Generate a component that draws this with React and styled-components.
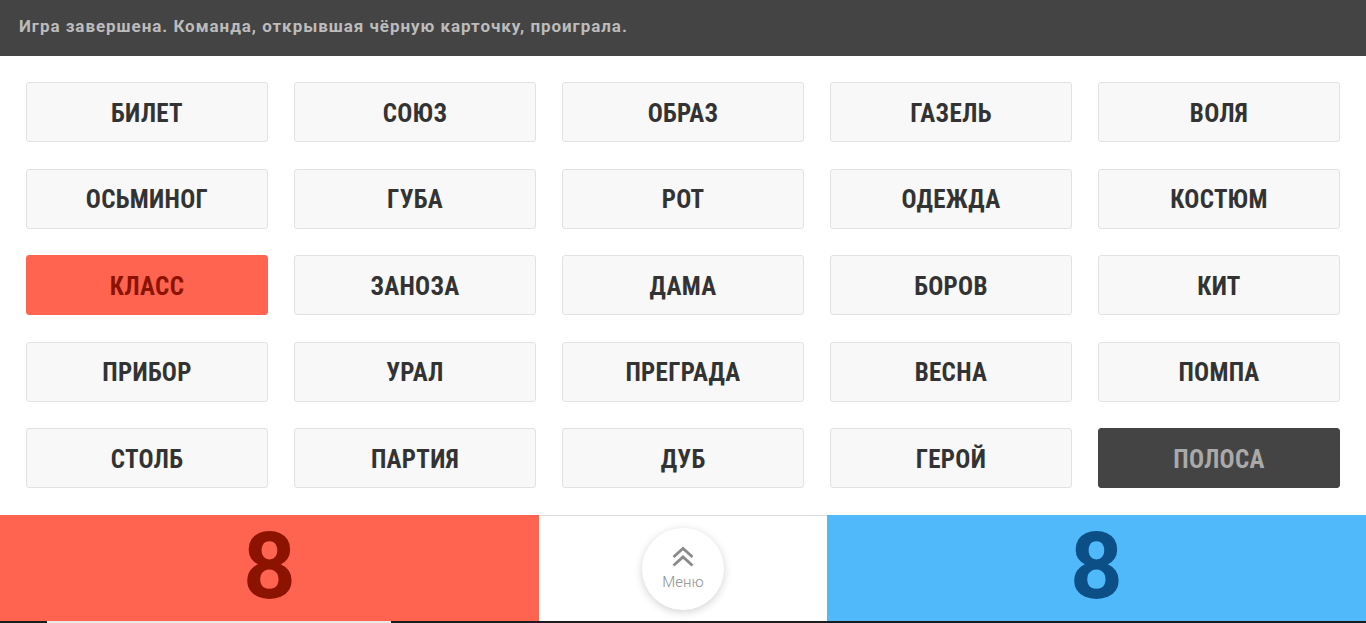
import React from 'react';
import styled, { createGlobalStyle } from 'styled-components';

const GlobalStyle = createGlobalStyle`
  html, body {
    margin: 0;
    padding: 0;
    background: #fff;
    font-family: "Roboto Condensed", Roboto, "Liberation Sans", sans-serif;
  }
  * { box-sizing: border-box; }
`;

const WORDS = [
  ['БИЛЕТ', 'СОЮЗ', 'ОБРАЗ', 'ГАЗЕЛЬ', 'ВОЛЯ'],
  ['ОСЬМИНОГ', 'ГУБА', 'РОТ', 'ОДЕЖДА', 'КОСТЮМ'],
  ['КЛАСС', 'ЗАНОЗА', 'ДАМА', 'БОРОВ', 'КИТ'],
  ['ПРИБОР', 'УРАЛ', 'ПРЕГРАДА', 'ВЕСНА', 'ПОМПА'],
  ['СТОЛБ', 'ПАРТИЯ', 'ДУБ', 'ГЕРОЙ', 'ПОЛОСА'],
];

const OPENED = { 'КЛАСС': 'red', 'ПОЛОСА': 'black' };

function App() {
  return (
    <Page>
      <GlobalStyle />
      <StatusBar>Игра завершена. Команда, открывшая чёрную карточку, проиграла.</StatusBar>
      <Board>
        {WORDS.flat().map((w) => (
          <Card key={w} $kind={OPENED[w]}>
            <Label>{w}</Label>
          </Card>
        ))}
      </Board>
      <Footer>
        <Score $team="red">8</Score>
        <Middle>
          <MenuButton>
            <svg width="26" height="22" viewBox="0 0 26 22" fill="none" stroke="#8a8a8a" strokeWidth="2.8" strokeLinejoin="miter">
              <path d="M3.5 11 L13 2.5 L22.5 11" />
              <path d="M3.5 19.5 L13 11 L22.5 19.5" />
            </svg>
            <MenuText>Меню</MenuText>
          </MenuButton>
        </Middle>
        <Score $team="blue">8</Score>
      </Footer>
      <BottomStrip>
        <StripLight />
      </BottomStrip>
    </Page>
  );
}

const Page = styled.div`
  width: 1366px;
  height: 623px;
  display: flex;
  flex-direction: column;
  overflow: hidden;
`;

const StatusBar = styled.div`
  height: 56px;
  flex: none;
  background: #444444;
  color: #bcbcbc;
  font-family: Roboto, "Liberation Sans", sans-serif;
  font-weight: 700;
  font-size: 17px;
  letter-spacing: 0.95px;
  display: flex;
  align-items: center;
  padding: 0 19px 4px;
`;

const Board = styled.div`
  flex: none;
  display: grid;
  grid-template-columns: repeat(5, 242px);
  grid-auto-rows: 60px;
  column-gap: 26px;
  row-gap: 26.5px;
  padding: 26px 26px 27px;
`;

const cardColors = {
  red: { bg: '#ff6450', border: '#ff6450', fg: '#8c1300' },
  black: { bg: '#444444', border: '#444444', fg: '#a9a9a9' },
};

const Card = styled.div`
  display: flex;
  align-items: center;
  justify-content: center;
  border-radius: 3px;
  background: ${(p) => (p.$kind ? cardColors[p.$kind].bg : '#f8f8f8')};
  border: 1px solid ${(p) => (p.$kind ? cardColors[p.$kind].border : '#e2e2e2')};
  color: ${(p) => (p.$kind ? cardColors[p.$kind].fg : '#333333')};
`;

const Label = styled.span`
  font-size: 25px;
  font-weight: 700;
  letter-spacing: 0.3px;
  padding-top: 2px;
`;

const Footer = styled.div`
  flex: none;
  height: 106px;
  display: grid;
  grid-template-columns: 539px 288px 1fr;
`;

const teamColors = {
  red: { bg: '#ff6450', fg: '#8c1300' },
  blue: { bg: '#50b9fa', fg: '#0b4f86' },
};

const Score = styled.div`
  background: ${(p) => teamColors[p.$team].bg};
  color: ${(p) => teamColors[p.$team].fg};
  font-family: Roboto, "Liberation Sans", sans-serif;
  font-weight: 700;
  font-size: 92px;
  line-height: 1;
  display: flex;
  align-items: center;
  justify-content: center;
  padding-bottom: 2px;
`;

const Middle = styled.div`
  background: #fff;
  border-top: 1px solid #dcdcdc;
  display: flex;
  align-items: center;
  justify-content: center;
`;

const MenuButton = styled.div`
  width: 82px;
  height: 82px;
  border-radius: 50%;
  background: #fff;
  box-shadow: 0 2px 8px rgba(0, 0, 0, 0.18);
  display: flex;
  flex-direction: column;
  align-items: center;
  justify-content: center;
  gap: 6px;
  padding-bottom: 1px;
`;

const MenuText = styled.span`
  font-family: Roboto, sans-serif;
  font-weight: 300;
  font-size: 15px;
  line-height: 16px;
  color: #8f8f8f;
`;

const BottomStrip = styled.div`
  flex: none;
  height: 2px;
  background: #1c1c1c;
  padding-left: 47px;
`;

const StripLight = styled.div`
  width: 344px;
  height: 100%;
  background: #f2e6e4;
`;

export default App;
